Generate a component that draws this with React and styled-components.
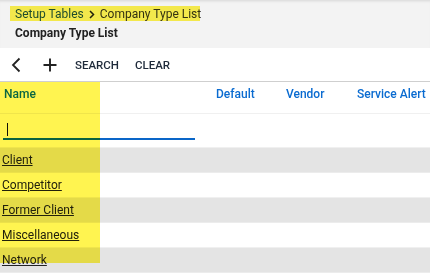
import React from 'react'
import styled, { createGlobalStyle } from 'styled-components'

const GlobalStyle = createGlobalStyle`
  html, body {
    margin: 0;
    padding: 0;
    background: #fff;
    font-family: Roboto, "Liberation Sans", sans-serif;
  }
`

const rows = ['Client', 'Competitor', 'Former Client', 'Miscellaneous', 'Network']

const Page = styled.div`
  position: relative;
  width: 430px;
  height: 279px;
  overflow: hidden;
`

const Header = styled.header`
  height: 48px;
  background: #f3f3f3;
  box-shadow: inset 0 3px 3px -2px rgba(0, 0, 0, 0.12);
  padding: 7px 0 0 15px;
  box-sizing: border-box;
`

const Crumbs = styled.div`
  position: relative;
  display: flex;
  align-items: center;
  gap: 5px;
  font-size: 12px;
  line-height: 14px;
  color: #333;
`

const CrumbLink = styled.span`
  color: #1f4f8a;
`

const Title = styled.h1`
  margin: 5px 0 0;
  font-size: 12px;
  line-height: 14px;
  font-weight: 700;
  color: #222;
`

const Toolbar = styled.div`
  display: flex;
  align-items: center;
  height: 33px;
  padding: 0 0 0 10px;
  border-bottom: 1px solid #cfcfcf;
`

const IconButton = styled.button`
  display: flex;
  align-items: center;
  justify-content: center;
  border: 0;
  background: none;
  padding: 0;
  width: ${p => p.$w}px;
  margin-right: ${p => p.$mr}px;
  color: #222;
`

const TextButton = styled.button`
  border: 0;
  background: none;
  padding: 0;
  margin-right: 16px;
  font-family: inherit;
  font-size: 11.5px;
  font-weight: 500;
  color: #1e2a3a;
`

const Grid = styled.div`
  display: grid;
  grid-template-columns: 212px 70px 71px 1fr;
  align-items: ${p => (p.$top ? 'start' : 'center')};
  height: ${p => p.$h}px;
  background: ${p => (p.$shade ? '#e4e4e4' : '#fff')};
  border-bottom: 1px solid ${p => (p.$shade ? '#ececec' : '#f0f0f0')};
  box-sizing: border-box;
`

const HeadCell = styled.div`
  padding: 5px 0 0 4px;
  font-size: 12px;
  line-height: 14px;
  font-weight: 500;
  color: #0a6bd0;
`

const FilterCell = styled.div`
  padding: 6px 17px 0 3px;
`

const FilterInput = styled.div`
  height: 17px;
  margin-top: 1px;
  border-bottom: 2px solid #0a66c8;
  display: flex;
  align-items: center;
  padding-left: 4px;
`

const Caret = styled.span`
  width: 1px;
  height: 13px;
  background: #111;
`

const LinkCell = styled.a`
  padding-left: 2px;
  font-size: 12px;
  color: #222;
  text-decoration: underline;
  justify-self: start;
`

const Highlight = styled.div`
  position: absolute;
  left: ${p => p.$x}px;
  top: ${p => p.$y}px;
  width: ${p => p.$w}px;
  height: ${p => p.$h}px;
  background: #fff450;
  mix-blend-mode: multiply;
  pointer-events: none;
`

const Back = () => (
  <svg width="10" height="16" viewBox="0 0 10 16" fill="none">
    <path d="M8.5 1.5 L2 8 L8.5 14.5" stroke="#222" strokeWidth="1.8" />
  </svg>
)

const Plus = () => (
  <svg width="14" height="14" viewBox="0 0 14 14" fill="none">
    <path d="M7 0.5 V13.5 M0.5 7 H13.5" stroke="#222" strokeWidth="1.9" />
  </svg>
)

const Chevron = () => (
  <svg width="6" height="9" viewBox="0 0 6 9" fill="none">
    <path d="M1 1 L4.5 4.5 L1 8" stroke="#222" strokeWidth="1.5" />
  </svg>
)

export default function App() {
  return (
    <Page>
      <GlobalStyle />
      <Header>
        <Crumbs>
          <CrumbLink>Setup Tables</CrumbLink>
          <Chevron />
          <span>Company Type List</span>
        </Crumbs>
        <Title>Company Type List</Title>
      </Header>
      <Toolbar>
        <IconButton $w={12} $mr={20}><Back /></IconButton>
        <IconButton $w={15} $mr={18}><Plus /></IconButton>
        <TextButton>SEARCH</TextButton>
        <TextButton>CLEAR</TextButton>
      </Toolbar>
      <Grid $h={32} $top>
        <HeadCell>Name</HeadCell>
        <HeadCell>Default</HeadCell>
        <HeadCell>Vendor</HeadCell>
        <HeadCell>Service Alert</HeadCell>
      </Grid>
      <Grid $h={34} $top>
        <FilterCell>
          <FilterInput><Caret /></FilterInput>
        </FilterCell>
      </Grid>
      {rows.map((name, i) => (
        <Grid key={name} $h={25} $shade={i % 2 === 0}>
          <LinkCell href="#">{name}</LinkCell>
        </Grid>
      ))}
      <Highlight $x={10} $y={6} $w={190} $h={15} />
      <Highlight $x={0} $y={82} $w={100} $h={181} />
    </Page>
  )
}
